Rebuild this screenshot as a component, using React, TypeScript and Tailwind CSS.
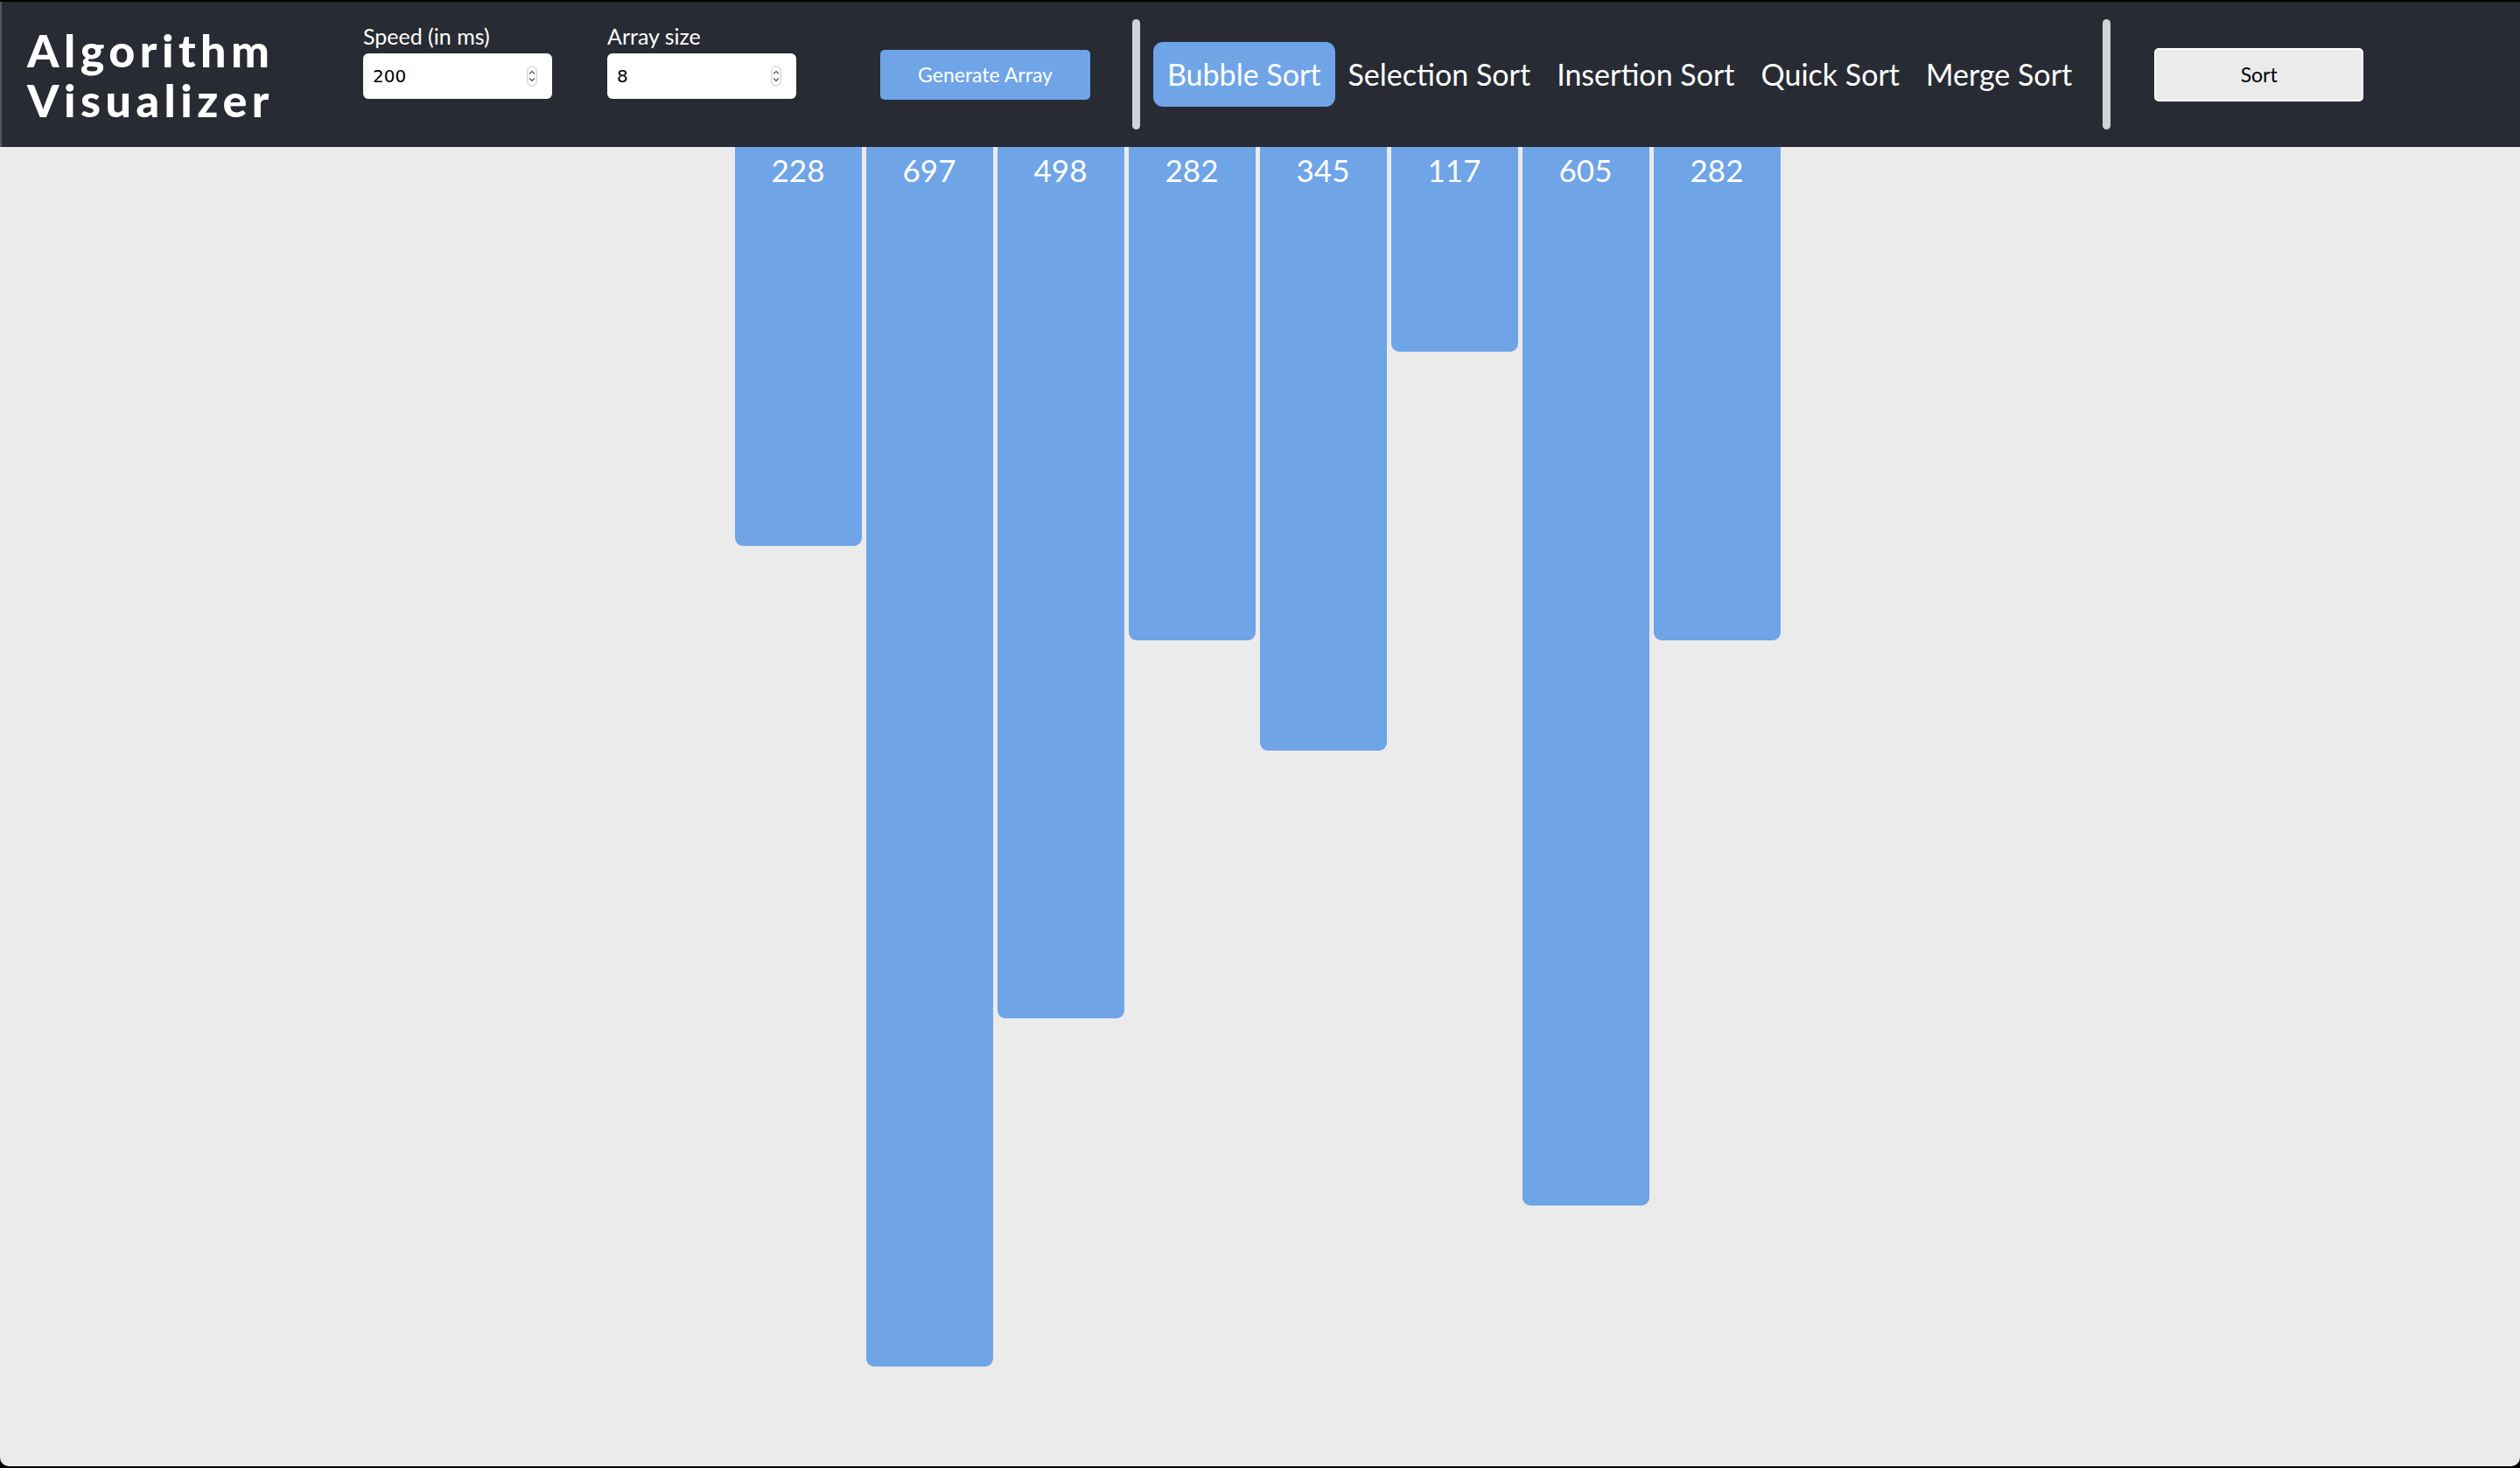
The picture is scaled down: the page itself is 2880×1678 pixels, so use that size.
import React from "react";

const bars = [228, 697, 498, 282, 345, 117, 605, 282];
const algorithms = ["Bubble Sort", "Selection Sort", "Insertion Sort", "Quick Sort", "Merge Sort"];

function Spinner() {
  return (
    <svg width="12" height="24" viewBox="0 0 12 24" className="shrink-0">
      <rect x="0.75" y="0.75" width="10.5" height="22.5" rx="5" fill="#fafafa" stroke="#c8c8c8" strokeWidth="1" />
      <path d="M3.5 9 L6 6.5 L8.5 9" fill="none" stroke="#555" strokeWidth="1.2" strokeLinecap="round" />
      <path d="M3.5 15 L6 17.5 L8.5 15" fill="none" stroke="#555" strokeWidth="1.2" strokeLinecap="round" />
    </svg>
  );
}

function NumberField({ label, value }: { label: string; value: string }) {
  return (
    <div className="flex flex-col w-[216px] mb-[30px]">
      <span className="text-white text-[25px] leading-[28px] mb-[6px]">{label}</span>
      <div className="h-[52px] bg-white rounded-[6px] flex items-center justify-between pl-[11px] pr-[17px]">
        <span className="text-black text-[20px] font-['DejaVu_Sans',sans-serif]">{value}</span>
        <Spinner />
      </div>
    </div>
  );
}

export default function App() {
  const selected = "Bubble Sort";

  return (
    <div className="h-[1678px] w-full bg-black pt-[2px] pb-[2px] font-['Lato',sans-serif]">
      <div className="h-full flex flex-col bg-[#ebebeb] rounded-b-[10px] overflow-hidden">
        <header className="h-[166px] shrink-0 bg-[#282b33] border-l-2 border-[#55575c] flex items-center pl-[29px]">
          <div className="w-[384px] text-white font-black text-[52px] leading-[57px] tracking-[5.5px] pt-[2px]">
            <div>Algorithm</div>
            <div>Visualizer</div>
          </div>

          <NumberField label="Speed (in ms)" value="200" />
          <div className="ml-[63px]">
            <NumberField label="Array size" value="8" />
          </div>

          <button className="ml-[96px] w-[240px] h-[57px] rounded-[5px] bg-[#6fa4e7] text-white text-[23px]">
            Generate Array
          </button>

          <div className="ml-[48px] w-[9px] h-[126px] rounded-full bg-[#d1d3d6]" />

          <nav className="ml-[15px] flex items-center">
            {algorithms.map((name) => (
              <button
                key={name}
                className={
                  name === selected
                    ? "h-[74px] px-[16px] rounded-[11px] bg-[#6fa4e7] text-white text-[34px] leading-none"
                    : "h-[74px] px-[15px] text-white text-[34px] leading-none"
                }
              >
                {name}
              </button>
            ))}
          </nav>

          <div className="ml-[20px] w-[9px] h-[126px] rounded-full bg-[#d1d3d6]" />

          <button className="ml-[50px] w-[239px] h-[61px] rounded-[5px] border-2 border-white bg-[#ebebeb] text-black text-[23px]">
            Sort
          </button>
        </header>

        <main className="flex-1 flex justify-center items-start gap-[5px] pr-[6px]">
          {bars.map((value, i) => (
            <div
              key={i}
              className="w-[145px] bg-[#6fa4e7] rounded-b-[9px] flex justify-center pt-[6px]"
              style={{ height: value * 2 }}
            >
              <span className="text-white text-[35px] leading-[40px]">{value}</span>
            </div>
          ))}
        </main>
      </div>
    </div>
  );
}
